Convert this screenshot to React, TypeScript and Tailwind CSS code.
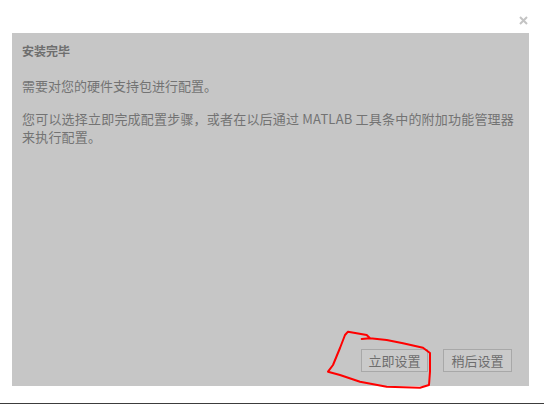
import React from "react"

const font = { fontFamily: '"Noto Sans CJK SC", "Noto Sans", sans-serif' }

export default function App() {
  return (
    <div className="relative w-[544px] h-[405px] bg-white overflow-hidden" style={font}>
      {/* header with close */}
      <div className="h-[33px] flex items-end justify-end pr-[16px] pb-[7px]">
        <svg width="9" height="9" viewBox="0 0 9 9" className="mb-[1px]">
          <path d="M1 1 L8 8 M8 1 L1 8" stroke="#c4c4c4" strokeWidth="2" />
        </svg>
      </div>

      {/* dialog body */}
      <div className="ml-[12px] w-[517px] h-[353px] bg-[#c6c6c6] flex flex-col pl-[10px] pt-[9px] pr-[17px] pb-[14px]">
        <div className="text-[12px] leading-[18px] font-bold text-[#6e6e6e]">安装完毕</div>
        <p className="mt-[17px] text-[13px] leading-[18px] text-[#737373]">需要对您的硬件支持包进行配置。</p>
        <p className="mt-[15px] text-[13px] leading-[18px] text-[#737373] whitespace-nowrap tracking-[0.2px]">
          您可以选择立即完成配置步骤，或者在以后通过 MATLAB 工具条中的附加功能管理器
          <br />
          来执行配置。
        </p>

        <div className="mt-auto flex justify-end gap-[15px]">
          <button className="w-[67px] h-[23px] border border-[#a8a8a8] bg-[#cacaca] text-[13px] leading-none text-[#6e6e6e]">
            立即设置
          </button>
          <button className="w-[69px] h-[23px] border border-[#a8a8a8] bg-[#cacaca] text-[13px] leading-none text-[#6e6e6e]">
            稍后设置
          </button>
        </div>
      </div>

      <div className="mt-[17px] h-[1px] bg-[#3c3c3c]" />

      {/* red hand-drawn annotation */}
      <svg className="absolute inset-0 pointer-events-none" width="544" height="405" viewBox="0 0 544 405">
        <path
          d="M361.7 339 L370 338.3 L366.7 335 L348 331.7 L345 335 L340 348 L333 365 L328 371.7 L340 375 L360 381.7 L386.7 386.7 L420 387.7 L429 385 L430 371.7 L430 353 L423 347.7 L403 343.3 L386.7 340 L370 338.3"
          fill="none"
          stroke="#ff0000"
          strokeWidth="2"
          strokeLinejoin="round"
          strokeLinecap="round"
        />
      </svg>
    </div>
  )
}
